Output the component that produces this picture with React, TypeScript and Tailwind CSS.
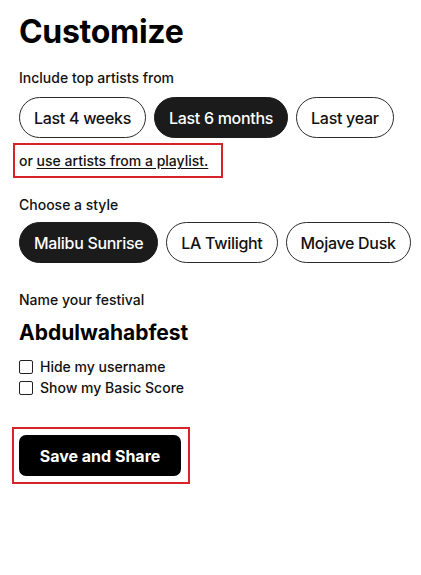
import { useState } from "react"

const ranges = ["Last 4 weeks", "Last 6 months", "Last year"]
const styles = ["Malibu Sunrise", "LA Twilight", "Mojave Dusk"]

function Pill({ label, active, onClick }: { label: string; active: boolean; onClick: () => void }) {
  return (
    <button
      onClick={onClick}
      className={
        active
          ? "h-[41px] shrink-0 whitespace-nowrap rounded-full border border-[#1b1b1b] bg-[#1b1b1b] px-[14px] text-[16px] font-medium tracking-[-0.3px] text-white"
          : "h-[41px] shrink-0 whitespace-nowrap rounded-full border border-[#2a2a2a] bg-white px-[14px] text-[16px] font-medium tracking-[-0.3px] text-[#111]"
      }
    >
      {label}
    </button>
  )
}

export default function App() {
  const [range, setRange] = useState("Last 6 months")
  const [style, setStyle] = useState("Malibu Sunrise")

  return (
    <div className="min-h-screen bg-white px-[19px] pt-[12px] text-[#111]" style={{ fontFamily: "Inter, 'Liberation Sans', sans-serif" }}>
      <h1 className="text-[32px] font-bold leading-[40px] tracking-[-0.3px] text-black">Customize</h1>

      <p className="mt-[16px] text-[14px] font-medium leading-[20px]">Include top artists from</p>
      <div className="mt-[9px] flex gap-[8px]">
        {ranges.map((r) => (
          <Pill key={r} label={r} active={range === r} onClick={() => setRange(r)} />
        ))}
      </div>

      <div className="-ml-[6px] mt-[5px] w-[210px] border-2 border-[#d9232b] px-[4px] py-[6px] text-[14px] font-medium leading-[19px]">
        or <a href="#" className="underline underline-offset-2">use artists from a playlist.</a>
      </div>

      <p className="mt-[17px] text-[14px] font-medium leading-[20px]">Choose a style</p>
      <div className="mt-[7px] flex gap-[8px]">
        {styles.map((s) => (
          <Pill key={s} label={s} active={style === s} onClick={() => setStyle(s)} />
        ))}
      </div>

      <p className="mt-[27px] text-[14px] font-medium leading-[20px]">Name your festival</p>
      <p className="mt-[10px] text-[21px] font-bold leading-[26px] text-black">Abdulwahabfest</p>

      <div className="mt-[14px] flex flex-col gap-[7px]">
        <label className="flex items-center gap-[7px] text-[14px] font-medium leading-[14px]">
          <input type="checkbox" className="h-[14px] w-[14px] appearance-none rounded-[2px] border border-[#222] bg-white" />
          Hide my username
        </label>
        <label className="flex items-center gap-[7px] text-[14px] font-medium leading-[14px]">
          <input type="checkbox" className="h-[14px] w-[14px] appearance-none rounded-[2px] border border-[#222] bg-white" />
          Show my Basic Score
        </label>
      </div>

      <div className="-ml-[7px] mt-[32px] w-[178px] border-2 border-[#d9232b] px-[5px] py-[6px]">
        <button className="h-[41px] w-[162px] rounded-[7px] bg-black text-[16px] font-bold text-white">Save and Share</button>
      </div>
    </div>
  )
}
